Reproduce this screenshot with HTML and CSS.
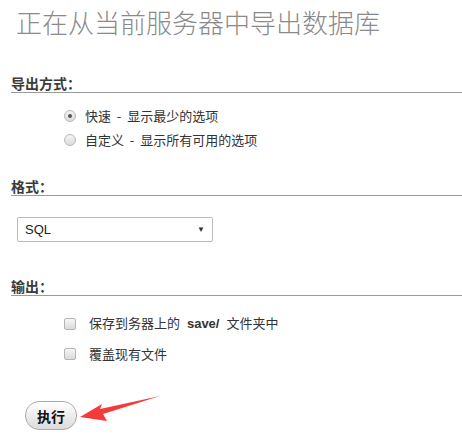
FILE: index.html
```html
<!DOCTYPE html>
<html lang="zh-CN">
<head>
<meta charset="utf-8">
<title>导出</title>
<link rel="stylesheet" href="styles.css">
</head>
<body>
<div class="page">
  <h2 class="title">正在从当前服务器中导出数据库</h2>

  <section class="group">
    <h3 class="group-head">导出方式：</h3>
    <div class="options">
      <label class="opt"><span class="radio checked"></span><span>快速 &nbsp;-&nbsp; 显示最少的选项</span></label>
      <label class="opt"><span class="radio"></span><span>自定义 &nbsp;-&nbsp; 显示所有可用的选项</span></label>
    </div>
  </section>

  <section class="group">
    <h3 class="group-head">格式：</h3>
    <div class="select-wrap">
      <div class="select"><span>SQL</span><span class="caret">▼</span></div>
    </div>
  </section>

  <section class="group">
    <h3 class="group-head">输出：</h3>
    <div class="checks">
      <label class="chk"><span class="box"></span><span>保存到务器上的 <b class="code">save/</b> 文件夹中</span></label>
      <label class="chk"><span class="box"></span><span>覆盖现有文件</span></label>
    </div>
  </section>

  <div class="actions">
    <button class="go">执行</button>
    <svg class="arrow" width="90" height="30" viewBox="0 0 90 30">
      <path d="M0 22 L22 9 L20 14 L80 1 L23 19 L27 26 Z" fill="#f63a3a"/>
    </svg>
  </div>
</div>
</body>
</html>
```
FILE: styles.css
```css
html, body {
  margin: 0;
  padding: 0;
  background: #fff;
}
body {
  font-family: "Noto Sans CJK SC", "Liberation Sans", sans-serif;
  color: #333;
}
.page {
  padding: 0 0 0 11px;
}
.title {
  margin: 0;
  padding: 6px 0 0 5px;
  font-size: 26px;
  font-weight: 300;
  color: #8a8a8a;
  line-height: 32px;
  height: 64px;
}
.group-head {
  margin: 0;
  font-size: 14px;
  font-weight: bold;
  color: #3b3b3b;
  line-height: 18px;
  padding-top: 4px;
  border-bottom: 1px solid #9a9a9a;
}
.options {
  padding: 11px 0 0 53px;
  height: 80px;
  box-sizing: border-box;
}
.opt, .chk {
  display: flex;
  align-items: center;
  font-size: 13px;
  color: #333;
  line-height: 24px;
}
.radio {
  width: 12px;
  height: 12px;
  border-radius: 50%;
  border: 1px solid #b8b8b8;
  background: linear-gradient(#f4f4f4, #dcdcdc);
  box-sizing: border-box;
  margin-right: 9px;
  position: relative;
}
.radio.checked::after {
  content: "";
  position: absolute;
  left: 3px;
  top: 3px;
  width: 4px;
  height: 4px;
  border-radius: 50%;
  background: #555;
}
.select-wrap {
  padding: 21px 0 0 6px;
  height: 77px;
  box-sizing: border-box;
}
.select {
  width: 196px;
  height: 25px;
  box-sizing: border-box;
  border: 1px solid #bbb;
  border-radius: 2px;
  display: flex;
  align-items: center;
  justify-content: space-between;
  padding: 0 7px 0 7px;
  font-family: "Liberation Sans", sans-serif;
  font-size: 13px;
  color: #222;
}
.caret {
  font-size: 8px;
  color: #333;
}
.checks {
  padding: 15px 0 0 53px;
  height: 105px;
  box-sizing: border-box;
  display: flex;
  flex-direction: column;
  gap: 6px;
}
.box {
  width: 12px;
  height: 12px;
  border: 1px solid #b5b5b5;
  border-radius: 2px;
  background: linear-gradient(#f6f6f6, #dadada);
  box-sizing: border-box;
  margin-right: 13px;
}
.code {
  font-family: "Liberation Sans", sans-serif;
  font-weight: bold;
  color: #333;
  margin: 0 4px;
}
.actions {
  display: flex;
  align-items: flex-start;
  padding-left: 14px;
}
.go {
  width: 52px;
  height: 29px;
  border: 1px solid #aaa;
  border-radius: 14px;
  background: linear-gradient(#ffffff, #dcdcdc);
  font-family: "Noto Sans CJK SC", sans-serif;
  font-size: 14px;
  font-weight: bold;
  color: #111;
  padding: 0;
}
.arrow {
  margin-left: 3px;
  margin-top: -6px;
}
```
